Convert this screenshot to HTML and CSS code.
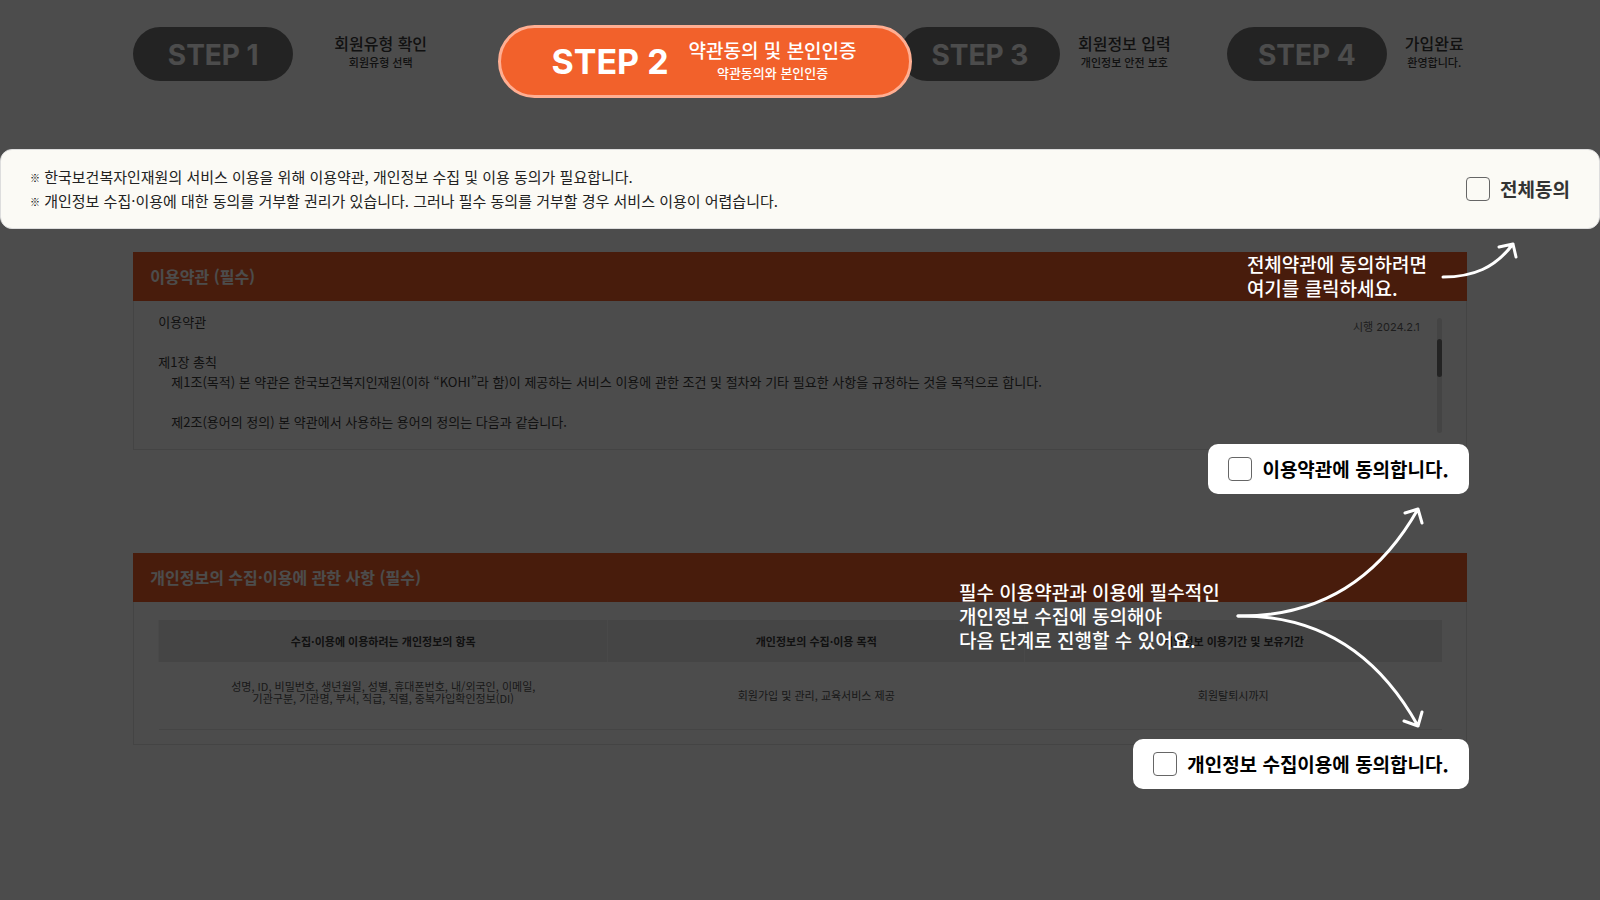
FILE: index.html
```html
<!DOCTYPE html>
<html lang="ko">
<head>
<meta charset="utf-8">
<meta name="viewport" content="width=device-width, initial-scale=1">
<title>회원가입 - 약관동의 및 본인인증</title>
<link rel="stylesheet" href="styles.css">
</head>
<body>
<div class="page">
  <ol class="steps">
    <li class="step step-wide">
      <span class="step-pill">STEP 1</span>
      <div class="step-text"><strong class="step-title">회원유형 확인</strong><span class="step-sub">회원유형 선택</span></div>
    </li>
    <li class="step step-current" aria-current="step">
      <span class="step-number">STEP 2</span>
      <div class="step-text"><strong class="step-title">약관동의 및 본인인증</strong><span class="step-sub">약관동의와 본인인증</span></div>
    </li>
    <li class="step">
      <span class="step-pill">STEP 3</span>
      <div class="step-text"><strong class="step-title">회원정보 입력</strong><span class="step-sub">개인정보 안전 보호</span></div>
    </li>
    <li class="step">
      <span class="step-pill">STEP 4</span>
      <div class="step-text"><strong class="step-title">가입완료</strong><span class="step-sub">환영합니다.</span></div>
    </li>
  </ol>

  <section class="notice">
    <div class="notice-text">
      <p><span class="mark">※</span> 한국보건복자인재원의 서비스 이용을 위해 이용약관, 개인정보 수집 및 이용 동의가 필요합니다.</p>
      <p><span class="mark">※</span> 개인정보 수집·이용에 대한 동의를 거부할 권리가 있습니다. 그러나 필수 동의를 거부할 경우 서비스 이용이 어렵습니다.</p>
    </div>
    <label class="check check-all" for="agree-all"><input class="check-box" type="checkbox" id="agree-all">전체동의</label>
    <div class="callout callout-all">
      <p class="callout-text">전체약관에 동의하려면<br>여기를 클릭하세요.</p>
      <svg class="arrow" width="80" height="40" viewBox="0 0 80 40" aria-hidden="true">
        <path d="M4 37C34 37 56 28 74 4M60 7L74 4L77 17"/>
      </svg>
    </div>
  </section>

  <main class="content">
    <section class="group">
      <h2 class="card-head">이용약관 (필수)</h2>
      <div class="card-body terms">
        <div class="terms-text">
          <p>이용약관</p>
          <p class="terms-chapter">제1장 총칙</p>
          <p class="terms-article">제1조(목적) 본 약관은 한국보건복지인재원(이하 “KOHI”라 함)이 제공하는 서비스 이용에 관한 조건 및 절차와 기타 필요한 사항을 규정하는 것을 목적으로 합니다.</p>
          <p class="terms-article terms-next">제2조(용어의 정의) 본 약관에서 사용하는 용어의 정의는 다음과 같습니다.</p>
        </div>
        <span class="terms-date">시행 2024.2.1</span>
        <div class="scroll-track"><div class="scroll-thumb"></div></div>
      </div>
      <label class="check check-card" for="agree-terms"><input class="check-box" type="checkbox" id="agree-terms">이용약관에 동의합니다.</label>
    </section>

    <section class="group">
      <h2 class="card-head">개인정보의 수집·이용에 관한 사항 (필수)</h2>
      <div class="card-body privacy">
        <table class="table">
          <thead>
            <tr><th class="col-items">수집·이용에 이용하려는 개인정보의 항목</th><th>개인정보의 수집·이용 목적</th><th>개인정보 이용기간 및 보유기간</th></tr>
          </thead>
          <tbody>
            <tr>
              <td class="cell-items">성명, ID, 비밀번호, 생년월일, 성별, 휴대폰번호, 내/외국인, 이메일,<br>기관구분, 기관명, 부서, 직급, 직렬, 중복가입확인정보(DI)</td>
              <td>회원가입 및 관리, 교육서비스 제공</td>
              <td>회원탈퇴시까지</td>
            </tr>
          </tbody>
        </table>
      </div>
      <label class="check check-card" for="agree-privacy"><input class="check-box" type="checkbox" id="agree-privacy">개인정보 수집이용에 동의합니다.</label>
      <div class="callout callout-required">
        <p class="callout-text">필수 이용약관과 이용에 필수적인<br>개인정보 수집에 동의해야<br>다음 단계로 진행할 수 있어요.</p>
        <svg class="arrow" width="190" height="226" viewBox="0 0 190 226" aria-hidden="true">
          <path d="M4 111C86 112 145 73 184 4M171 8L184 4L188 18"/>
          <path d="M4 111C86 110 145 151 184 221M170 216L184 221L188 207"/>
        </svg>
      </div>
    </section>
  </main>
  <div class="dim"></div>
</div>
</body>
</html>
```
FILE: styles.css
```css
* { box-sizing: border-box; }

body {
  margin: 0;
  background: #fff;
  color: #3a3a3a;
  font-family: "Noto Sans CJK KR", "Noto Sans", sans-serif;
}

p, h2, ol { margin: 0; padding: 0; }

.page {
  position: relative;
  min-height: 100vh;
  padding-top: 25px;
  overflow: hidden;
}

/* Dark layer; the highlighted parts are stacked over it */
.dim {
  position: absolute;
  inset: 0;
  z-index: 1;
  background: rgba(0, 0, 0, 0.7);
}

.steps {
  display: grid;
  grid-template-columns: 365fr 402fr 327fr 240fr;
  align-items: start;
  margin: 0 8.33%;
  list-style: none;
}

.step {
  display: flex;
  align-items: center;
  gap: 18px;
  padding-top: 2px;
  white-space: nowrap;
}

.step-wide { gap: 41px; }

.step-pill {
  width: 160px;
  padding-top: 2px;
  border-radius: 27px;
  background: #777;
  color: #fff;
  font: 700 28px/52px Inter, sans-serif;
  text-align: center;
}

.step-text {
  display: flex;
  flex-direction: column;
  align-items: center;
  padding-bottom: 4px;
}

.step-title {
  font-size: 16px;
  font-weight: 500;
  line-height: 20px;
}

.step-sub {
  font-size: 11px;
  font-weight: 500;
  line-height: 18px;
}

.step-current {
  position: relative;
  z-index: 3;
  justify-content: center;
  gap: 20px;
  height: 73px;
  margin-right: -12px;
  padding: 0 2px 0 0;
  border: 3px solid #ffae92;
  border-radius: 37px;
  background: #f2612b;
  color: #fff;
}

.step-number { font: 700 34px/40px Inter, sans-serif; }

.step-current .step-text { padding-bottom: 1px; }
.step-current .step-title { font-size: 19px; line-height: 24px; }
.step-current .step-sub { font-size: 13px; line-height: 22px; }

.notice {
  position: relative;
  z-index: 2;
  display: flex;
  align-items: center;
  justify-content: space-between;
  margin-top: 51px;
  padding: 15px 29px;
  border: 1px solid #ddd;
  border-radius: 12px;
  background: #fbfaf5;
}

.notice-text {
  color: #222;
  font-size: 15px;
  line-height: 24px;
}

.mark {
  color: #000;
  font-size: 10px;
  font-weight: 700;
  line-height: 1;
  vertical-align: 1px;
}

.check {
  display: flex;
  align-items: center;
  gap: 10px;
  color: #000;
  font-size: 19px;
  font-weight: 700;
  line-height: 24px;
  white-space: nowrap;
}

.check-all { color: #333; }

.check-box {
  appearance: none;
  width: 24px;
  height: 24px;
  margin: 0;
  border: 1px solid #666;
  border-radius: 4px;
  background: #fff;
}

.check-all .check-box { background: transparent; }
.check-box:checked { background: #f2612b; }

.check-card {
  position: relative;
  z-index: 2;
  width: fit-content;
  margin: -6px -2px 0 auto;
  padding: 13px 20px;
  border-radius: 10px;
  background: #fff;
}

.callout {
  position: absolute;
  z-index: 3;
  display: flex;
  color: #fff;
  font-size: 19px;
  font-weight: 500;
  line-height: 24px;
  white-space: nowrap;
}

.callout-all {
  top: calc(100% + 12px);
  right: 80px;
  gap: 12px;
}

.callout-all .callout-text { padding-top: 12px; }

.callout-required {
  top: -48px;
  right: 43px;
  align-items: center;
  gap: 14px;
}

.callout-required .callout-text { padding-bottom: 4px; }

.arrow {
  flex: none;
  fill: none;
  stroke: #fff;
  stroke-width: 3;
  stroke-linecap: round;
  stroke-linejoin: round;
}

.content {
  display: grid;
  gap: 59px;
  margin: 23px 8.33% 0;
}

.group { position: relative; }

.card-head {
  padding: 0 17px;
  background: #f0602b;
  color: #fff;
  font-size: 16px;
  font-weight: 700;
  line-height: 49px;
}

.card-body {
  border: 1px solid #e4e4e4;
  border-top: 0;
}

.terms {
  display: flex;
  align-items: flex-start;
  padding: 11px 24px 16px;
}

.terms-text {
  flex: 1;
  font-size: 13px;
  line-height: 20px;
}

.terms-chapter, .terms-next { margin-top: 20px; }
.terms-article { padding-left: 13px; }

.terms-date {
  padding-top: 5px;
  color: #666;
  font: 400 11px/20px Inter, "Noto Sans CJK KR", sans-serif;
}

.scroll-track {
  width: 5px;
  height: 115px;
  margin: 6px 0 0 17px;
  padding-top: 21px;
  border-radius: 3px;
  background: #e4e4e4;
}

.scroll-thumb {
  height: 38px;
  border-radius: 3px;
  background: #777;
}

.privacy { padding: 18px 24px 14px; }

.table {
  width: 100%;
  border-collapse: collapse;
  table-layout: fixed;
  font-size: 11px;
  line-height: 12px;
  text-align: center;
}

.col-items { width: 35%; }

.table th {
  height: 42px;
  padding: 0;
  border-left: 1px solid #f6f6f6;
  background: #e8e8e8;
  font-weight: 700;
}

.table td {
  height: 67px;
  padding: 0;
  border-bottom: 1px solid #e8e8e8;
  color: #555;
}

.table .cell-items { padding-bottom: 6px; }
```
